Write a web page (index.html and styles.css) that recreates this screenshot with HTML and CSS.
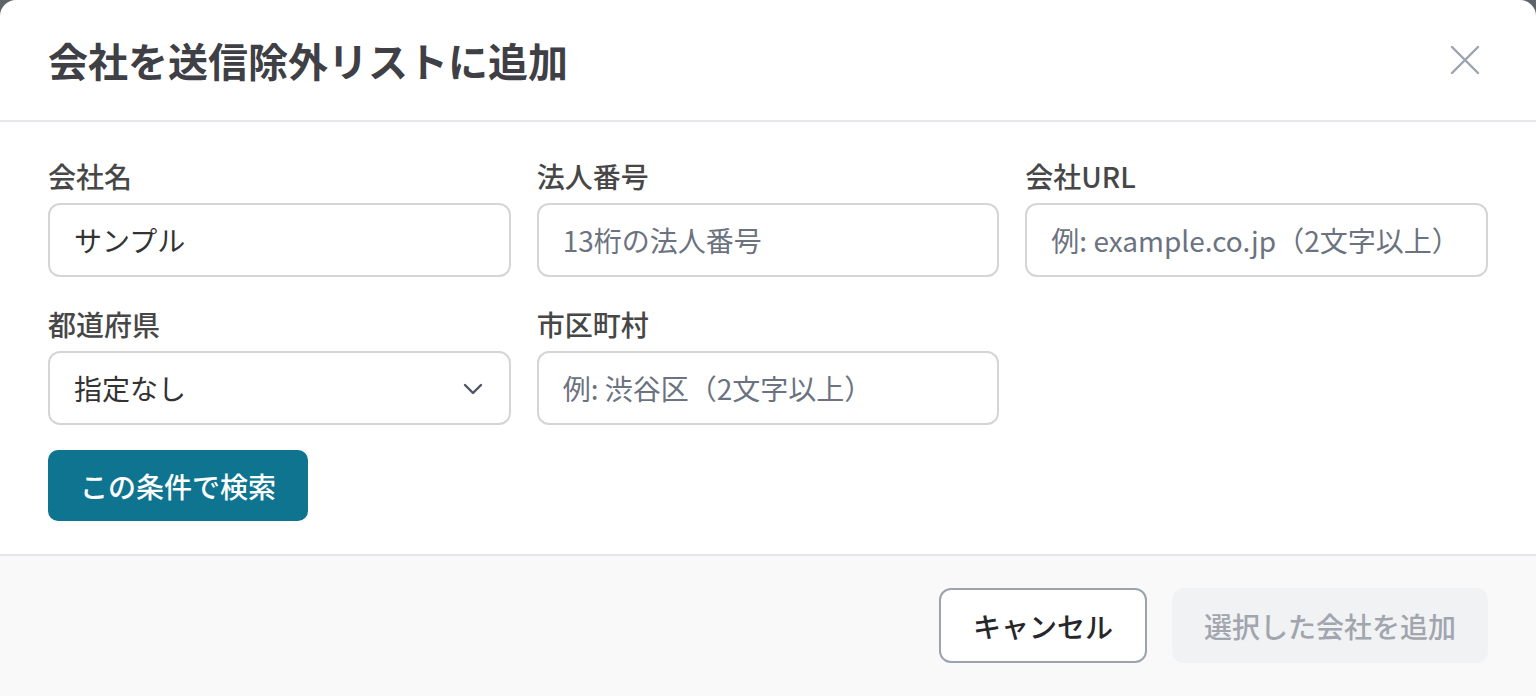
FILE: index.html
```html
<!DOCTYPE html>
<html lang="ja">
<head>
<meta charset="utf-8">
<title>会社を送信除外リストに追加</title>
<link rel="stylesheet" href="styles.css">
</head>
<body>
<div class="modal">
  <header class="modal-header">
    <h1 class="modal-title">会社を送信除外リストに追加</h1>
    <button class="close-btn" aria-label="閉じる">
      <svg width="30" height="30" viewBox="0 0 30 30"><path d="M2 2 L28 28 M28 2 L2 28" stroke="#9ca3af" stroke-width="2.4" stroke-linecap="round" fill="none"/></svg>
    </button>
  </header>
  <section class="modal-body">
    <div class="form-grid">
      <div class="field">
        <label class="field-label">会社名</label>
        <input class="text-input" type="text" value="サンプル">
      </div>
      <div class="field">
        <label class="field-label">法人番号</label>
        <input class="text-input" type="text" placeholder="13桁の法人番号">
      </div>
      <div class="field">
        <label class="field-label">会社URL</label>
        <input class="text-input" type="text" placeholder="例: example.co.jp（2文字以上）">
      </div>
      <div class="field">
        <label class="field-label">都道府県</label>
        <div class="select-wrap">
          <select class="select-input">
            <option>指定なし</option>
          </select>
          <svg class="chevron" width="20" height="12" viewBox="0 0 20 12"><path d="M2 2 L10 10 L18 2" stroke="#4b5563" stroke-width="2.4" stroke-linecap="round" stroke-linejoin="round" fill="none"/></svg>
        </div>
      </div>
      <div class="field">
        <label class="field-label">市区町村</label>
        <input class="text-input" type="text" placeholder="例: 渋谷区（2文字以上）">
      </div>
    </div>
    <button class="search-btn">この条件で検索</button>
  </section>
  <footer class="modal-footer">
    <button class="btn btn-cancel">キャンセル</button>
    <button class="btn btn-add" disabled>選択した会社を追加</button>
  </footer>
</div>
</body>
</html>
```
FILE: styles.css
```css
* { box-sizing: border-box; }
html, body { margin: 0; padding: 0; }
body {
  background: #5f636a;
  font-family: "Noto Sans CJK JP", "Noto Sans", sans-serif;
  height: 696px;
  overflow: hidden;
}
.modal {
  background: #ffffff;
  border-radius: 16px 16px 0 0;
  width: 1536px;
  min-height: 696px;
  display: flex;
  flex-direction: column;
}
.modal-header {
  height: 122px;
  border-bottom: 2px solid #e5e7eb;
  display: flex;
  align-items: center;
  justify-content: space-between;
  padding: 0 56px 0 48px;
}
.modal-title {
  margin: 0;
  font-size: 40px;
  font-weight: 700;
  color: #3f3f46;
  line-height: 1;
}
.close-btn {
  background: none;
  border: none;
  padding: 0;
  width: 30px;
  height: 30px;
  display: flex;
  cursor: pointer;
}
.modal-body {
  padding: 33px 48px 33px 48px;
  border-bottom: 2px solid #e5e7eb;
}
.form-grid {
  display: grid;
  grid-template-columns: repeat(3, 1fr);
  column-gap: 26px;
  row-gap: 26px;
}
.field {
  display: flex;
  flex-direction: column;
}
.field-label {
  font-size: 28px;
  line-height: 42px;
  font-weight: 500;
  color: #474747;
  margin-bottom: 6px;
}
.text-input, .select-input {
  height: 74px;
  width: 100%;
  border: 2px solid #d4d5d8;
  border-radius: 12px;
  padding: 0 24px;
  font-family: inherit;
  font-size: 28px;
  color: #333333;
  background: #ffffff;
  outline: none;
}
.text-input::placeholder {
  color: #6b7280;
  opacity: 1;
}
.select-wrap {
  position: relative;
}
.select-input {
  appearance: none;
  -webkit-appearance: none;
}
.chevron {
  position: absolute;
  right: 28px;
  top: 32px;
}
.search-btn {
  margin-top: 25px;
  height: 71px;
  padding: 0 32px;
  background: #0e7490;
  color: #ffffff;
  border: none;
  border-radius: 10px;
  font-family: inherit;
  font-size: 28px;
  font-weight: 500;
  cursor: pointer;
}
.modal-footer {
  flex: 1;
  background: #f9f9fa;
  display: flex;
  justify-content: flex-end;
  align-items: flex-start;
  gap: 25px;
  padding: 32px 48px 0 0;
}
.btn {
  height: 75px;
  padding: 0 32px;
  border-radius: 12px;
  font-family: inherit;
  font-size: 28px;
  font-weight: 500;
}
.btn-cancel {
  background: #ffffff;
  border: 2px solid #9ca3af;
  color: #27272a;
}
.btn-add {
  padding: 0 30px;
  background: #f1f2f4;
  border: 2px solid #f1f2f4;
  color: #a1a5ad;
}
```
